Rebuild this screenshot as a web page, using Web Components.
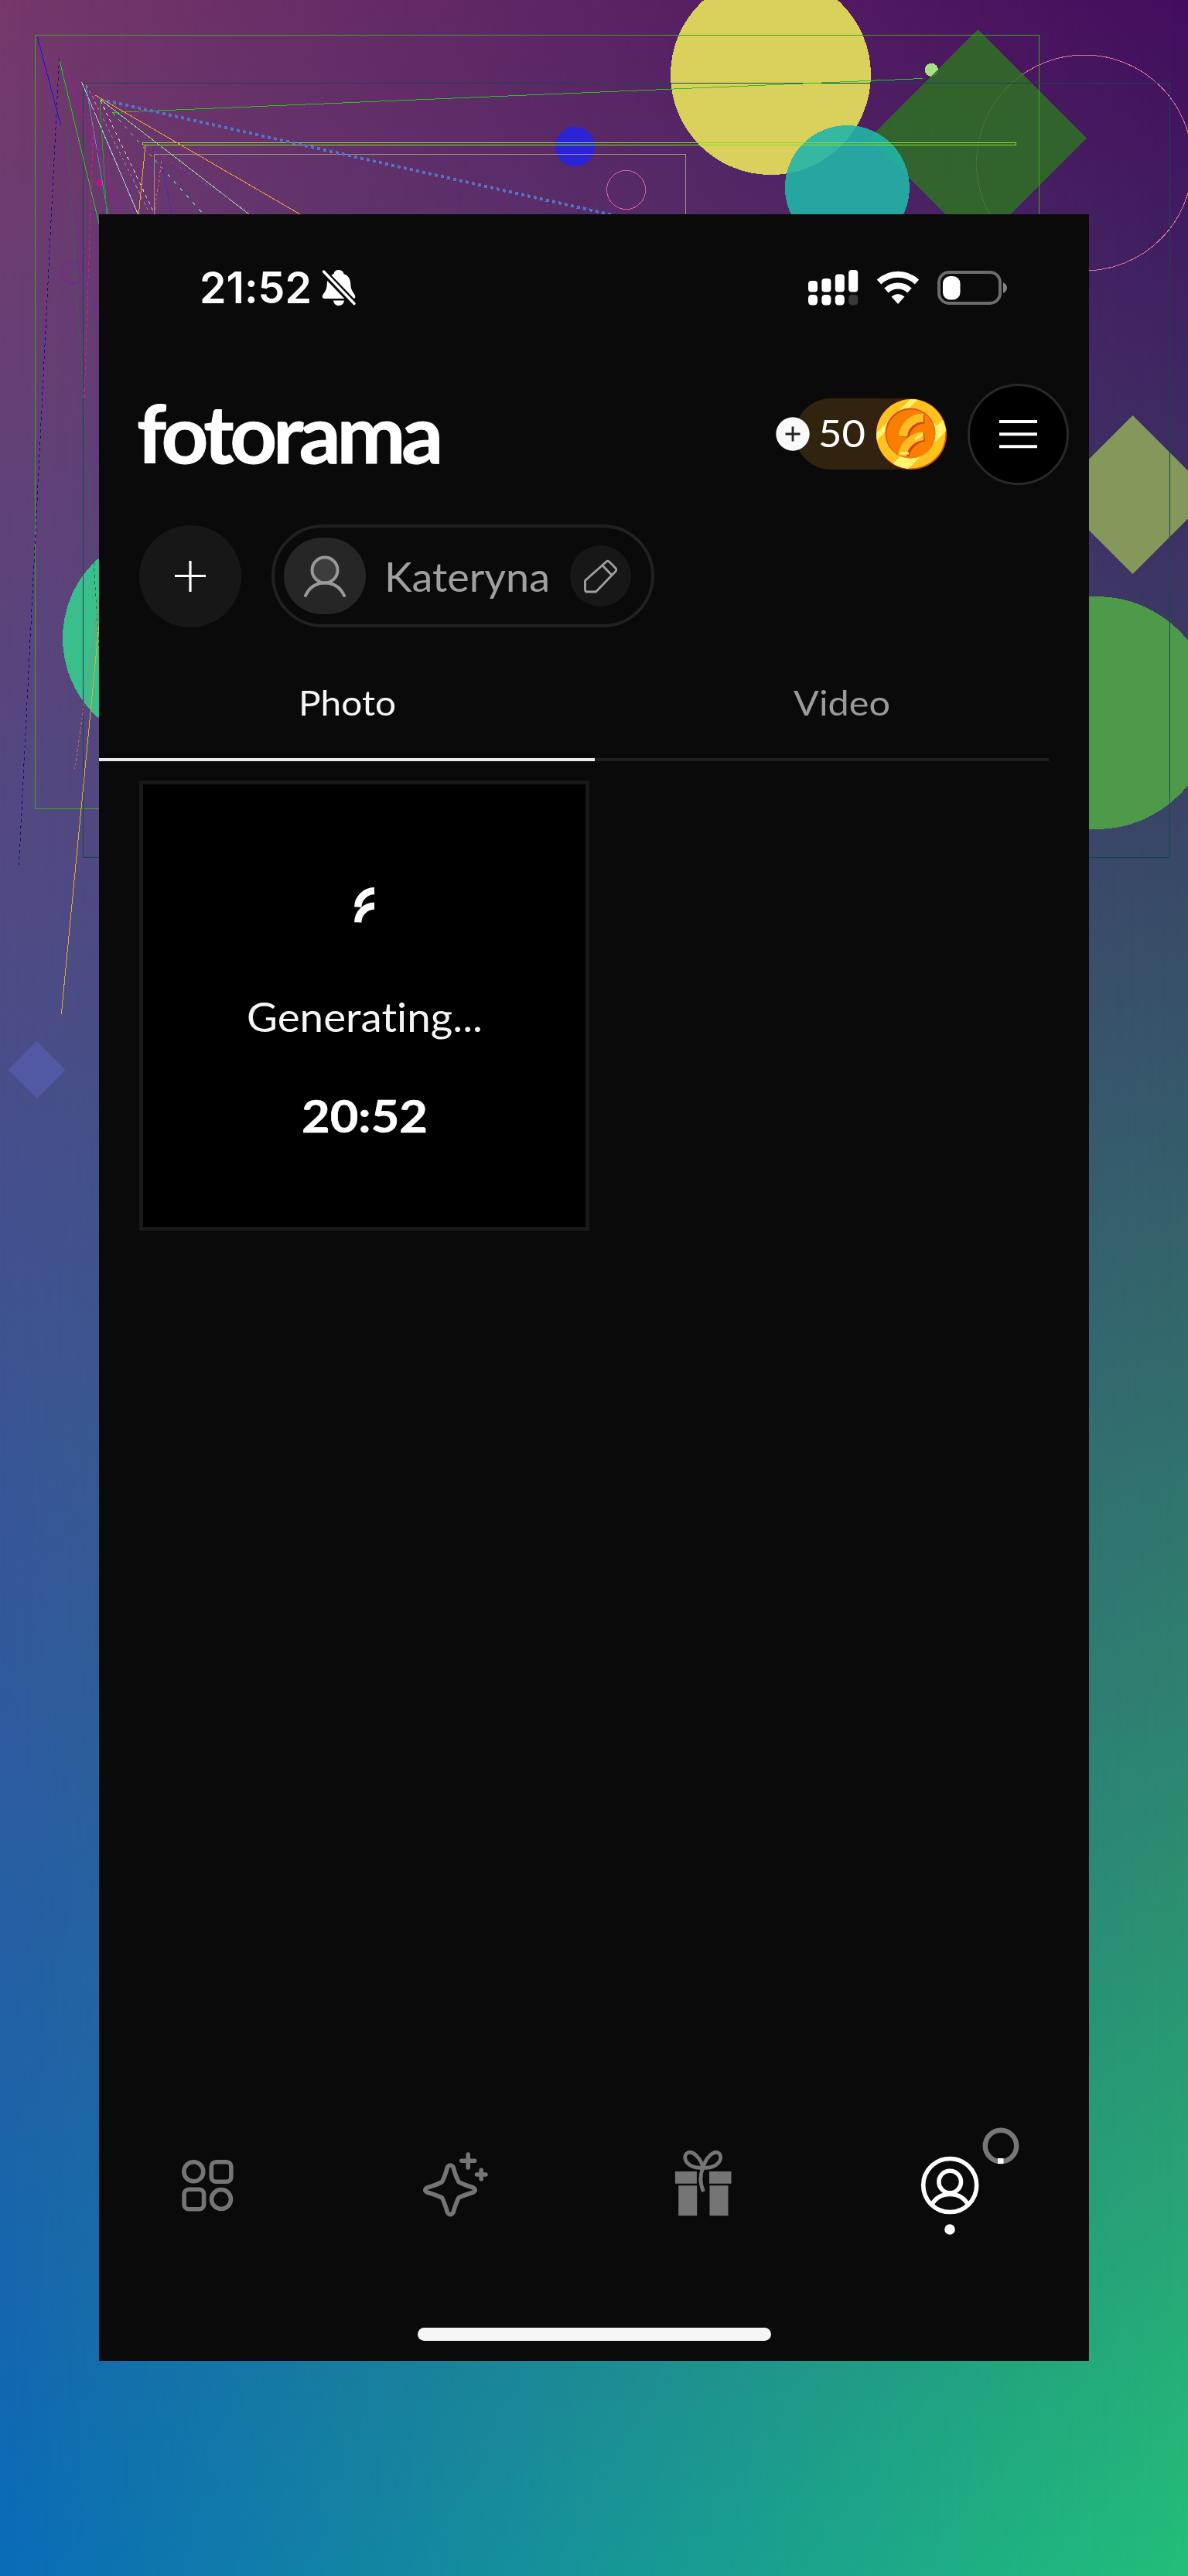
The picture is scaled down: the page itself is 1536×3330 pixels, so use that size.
<!DOCTYPE html>
<html lang="en">
<head>
<meta charset="utf-8">
<title>fotorama</title>
<style>
  body {
    margin: 0;
    width: 1536px;
    height: 3330px;
    overflow: hidden;
    font-family: Lato, "Open Sans", sans-serif;
    font-variant-ligatures: none;
    color: #fff;
  }
</style>
</head>
<body>
<poster-frame>
  <phone-screen>
    <status-bar>21:52</status-bar>
    <app-header balance="50">fotorama</app-header>
    <profile-row>Kateryna</profile-row>
    <tab-bar>
      <tab-item active width="126">Photo</tab-item>
      <tab-item width="125">Video</tab-item>
    </tab-bar>
    <photo-card time="20:52">Generating...</photo-card>
    <bottom-nav slot="nav"></bottom-nav>
  </phone-screen>
</poster-frame>

<script>
const ICONS = {
  bell: [44, 48, `
    <path fill="#fff" d="M22 1c4 0 6 2.500 6.500 5 6 2 8.500 7 8.800 13 .3 8 3 10 5.200 14 2 4 0 5-2 5H4c-3 0-4-2-2.500-5C4 29 6.500 27 6.800 19 7 13 10 8 15.500 6 16 3 18 1 22 1zM15 40.500h14c-.5 4-3 6.500-7 6.500s-6.500-2.500-7-6.500z"/>
    <path stroke="#0a0a0a" stroke-width="9" d="M-2-1 46 49"/>
    <path stroke="#fff" stroke-width="3.400" stroke-linecap="round" d="M2.500 3 42 44.500"/>`],
  signal: [65, 46, `
    <g fill="#fff"><rect y="14" width="12" height="14.500" rx="4"/><rect x="17.400" y="11" width="12" height="17.500" rx="4"/>
    <rect x="34.800" y="5.500" width="12" height="23" rx="4"/><rect x="52.200" width="12" height="28.500" rx="4"/>
    <rect y="32" width="12" height="13.500" rx="4.500"/><rect x="17.400" y="32" width="12" height="13.500" rx="4.500"/><rect x="34.800" y="32" width="12" height="13.500" rx="4.500"/></g>
    <rect x="52.200" y="32" width="12" height="13.500" rx="4.500" fill="#3a3a3a"/>`],
  wifi: [56, 42, `
    <g fill="none" stroke="#fff" stroke-width="8"><path d="M3.500 13.500a35.500 35.500 0 0 1 49 0"/><path d="M13 24.500a22 22 0 0 1 30 0"/></g>
    <path fill="#fff" d="M28 42 19.500 32.500Q28 25.500 36.500 32.500z"/>`],
  battery: [91, 44, `
    <rect x="2" y="2" width="79" height="40" rx="13" fill="none" stroke="#6c6c6c" stroke-width="4"/>
    <rect x="7" y="7" width="22.500" height="30.500" rx="9.500" fill="#fff"/><path fill="#858585" d="M85 15q5 3 5 7t-5 7z"/>`],
  mark: [26, 46, `
    <g fill="none" stroke="#fff" stroke-width="9.300"><path d="M26 4.700A21.500 21.500 0 0 0 4.700 25.500"/><path d="M26 24.200A21.500 21.500 0 0 0 4.700 45.300"/></g>`],
  coin: [92, 92, `
    <defs><clipPath id="c"><circle cx="46" cy="46" r="45"/></clipPath></defs>
    <circle cx="46.500" cy="46.500" r="45.500" fill="#c9541c"/>
    <g clip-path="url(#c)"><circle cx="45.500" cy="45.500" r="45" fill="#ffc21f"/>
    <path d="M-6 57 56-5M78 34 22 90M91 37 31 97" stroke="#fff36e" stroke-width="7"/><path d="M92 32 31 93" stroke="#fff36e" stroke-width="13"/></g>
    <circle cx="45" cy="45" r="32.500" fill="#d9541b"/><circle cx="45.800" cy="46" r="31.500" fill="#fa7e00"/>
    <g fill="none" stroke-width="11"><g stroke="#c9481e"><path d="M63.500 27A26 26 0 0 0 38 50"/><path d="M63.500 50A30 30 0 0 0 38 74"/></g>
    <path stroke="#ffbd22" d="M62 25A26 26 0 0 0 35.500 49"/><path stroke="#ffbd22" d="M62 48.500A30 30 0 0 0 34.500 74"/></g>
    <path stroke="#fff36e" stroke-width="3" d="m51 53 10-7M32 71h11"/>`],
  addSmall: [44, 44, `<circle cx="22" cy="22" r="21.700" fill="#f9f9f9"/><path stroke="#222" stroke-width="2.800" d="M12.500 22h19M22 12.500v19"/>`],
  menu: [50, 36, `<path stroke="#fff" stroke-width="4" d="M0 2h49M0 18.200h49M0 34.200h49"/>`],
  plus: [40, 40, `<path stroke="#fff" stroke-width="3.200" d="M0 19.500h40M20 0v40"/>`],
  person: [54, 54, `
    <g stroke="#999" stroke-width="4" stroke-linecap="round"><circle cx="27" cy="19" r="16.500" fill="#3d3d3d"/>
    <path fill="none" d="M2 52c4.500-10 13-16.500 25-16.500S47.500 42 52 52"/></g>`],
  pencil: [44, 44, `
    <path fill="none" stroke="#a0a0a0" stroke-width="2.800" stroke-linejoin="round" d="M1.500 27.500 28.500 3.500Q30.500 1 33 3.500L40.500 11Q43 14 40.500 16L15.500 42H4Q1.500 42 1.500 39zM24 8 36 20.500"/>`],
  grid: [80, 120, `
    <g fill="none" stroke="#757575" stroke-width="5.600"><circle cx="22.300" cy="37.300" r="12.500"/><rect x="45.300" y="24.800" width="25.500" height="25.500" rx="6"/>
    <rect x="10.100" y="60.200" width="25.500" height="25.500" rx="6"/><circle cx="58" cy="73" r="12.500"/></g>`],
  sparkle: [80, 120, `
    <g fill="none" stroke="#757575" stroke-width="5.600" stroke-linecap="round" stroke-linejoin="round">
    <path d="M30.500 31.500Q34.200 26.500 38 31.500C40 39 42 45 45 50.500 51 54 57.500 56 64 58Q68.500 61 64 64C57.500 66 51 68 45 71 42 77 40 83 38 90Q34.200 95.500 30.500 90C28.500 83 26.500 77 23.500 71 17.500 68 11 66 4 64Q-.5 61 4 58C11 56 17.500 54 23.500 50.500 26.500 45 28.500 39 30.500 31.500z"/>
    <path d="M57.200 15v17M48.700 23.300h17M74.200 35.200v11.500M68.500 41h11.500"/></g>`],
  gift: [80, 120, `
    <path fill="#757575" d="M4.900 37h28v15.700h-28zM49 37h28.500v15.700H49zM9.200 55.300h24v39h-24zM49.500 55.300h24v39h-24z"/>
    <path fill="none" stroke="#757575" stroke-width="4.800" d="M41 32C22 34 14 21 19.500 14 27 8 38 20 41 32 44 20 55 8 62 14 67.500 21 59 34 41 32ZM41 32Q34.500 47 41.500 63"/>`],
  profile: [80, 120, `
    <g fill="none" stroke="#fff" stroke-width="5.600"><circle cx="40.200" cy="55" r="34.500"/><circle cx="40.200" cy="50.500" r="14.300"/>
    <path d="M16.700 80Q24.200 66.500 40.200 66.500T63.700 80"/></g><circle cx="40" cy="112" r="6.800" fill="#fff"/>`],
  spinner: [48, 48, `<circle cx="24" cy="24" r="20.200" fill="none" stroke="#777" stroke-width="6.400"/><path fill="#fff" d="M20 40h7.500v7H20z"/>`],
};

class AppIcon extends HTMLElement {
  connectedCallback() {
    const [w, h, body] = ICONS[this.getAttribute('name')];
    this.attachShadow({ mode: 'open' }).innerHTML = `
      <style>
        :host { display: block; flex: none; }
        svg { display: block; overflow: visible; }
      </style>
      <svg width="${w}" height="${h}" viewBox="0 0 ${w} ${h}">${body}</svg>`;
  }
}

// One line of text, its glyphs widened or narrowed to span the given width
class FitText extends HTMLElement {
  connectedCallback() {
    this.attachShadow({ mode: 'open' }).innerHTML = `
      <style>
        :host { display: block; flex: none; line-height: 1; white-space: nowrap; }
        span { display: inline-block; transform-origin: left; }
      </style>
      <span>${this.getAttribute('text')}</span>`;
    const span = this.shadowRoot.querySelector('span');
    const width = Number(this.getAttribute('width'));
    span.style.transform = `scaleX(${width / span.getBoundingClientRect().width})`;
    this.style.width = width + 'px';
  }
}

class PosterFrame extends HTMLElement {
  constructor() {
    super();
    this.attachShadow({ mode: 'open' }).innerHTML = `
      <style>
        :host {
          display: block;
          position: relative;
          box-sizing: border-box;
          width: 1536px;
          height: 3330px;
          padding: 277px 128px 278px;
          overflow: hidden;
          background: linear-gradient(#76386a, #0a6cb8);
        }
        .tint {
          position: absolute;
          inset: 0;
          background: linear-gradient(#430d5e, #23be78);
          -webkit-mask-image: linear-gradient(to right, transparent, #000);
          mask-image: linear-gradient(to right, transparent, #000);
        }
        svg { position: absolute; left: 0; top: 0; }
        ::slotted(*) { position: relative; }
      </style>
      <div class="tint"></div>
      <svg width="1536" height="1500" shape-rendering="crispEdges">
        <circle cx="996.500" cy="96.500" r="129.500" fill="#dad05c"/>
        <circle cx="1402" cy="210.500" r="139.500" fill="none" stroke="#e8749a"/>
        <circle cx="1204.400" cy="90.300" r="8.600" fill="#a6e283"/>
        <path fill="#2f7025" fill-opacity=".85" d="M1264.700 38 1405 178.500 1264.700 319 1124.500 178.500z"/>
        <circle cx="1095.400" cy="242.500" r="80.500" fill="#22b4a7" fill-opacity=".9"/>
        <circle cx="743.500" cy="189.500" r="25.700" fill="#2d23d6"/>
        <circle cx="809.600" cy="245.500" r="25" fill="none" stroke="#d863a0"/>
        <path fill="#83985a" d="M1464.300 537.200 1566.600 639.500 1464.300 741.800 1362 639.500z"/>
        <circle cx="1418" cy="921.500" r="150.500" fill="#4e9a4b"/>
        <circle cx="219.600" cy="825" r="138.600" fill="#3abe8b"/>
        <circle cx="94" cy="352.500" r="14" fill="none" stroke="#7a1ab0"/>
        <circle cx="129" cy="236.500" r="4.500" fill="#c80f80"/>
        <path fill="#5358a5" d="M47.700 1346 84.700 1383 47.700 1420 10.700 1383z"/>
        <g fill="none">
          <path stroke="#3aa91c" d="M45.500 45.500h1298v1000H45.500z"/>
          <path stroke="#12494f" d="M107.500 107.500h1405v1001h-1405z"/>
          <path stroke="#a0937f" d="M199.500 199.500h687v200h-687z"/>
          <path stroke="#8adf22" d="M184.500 184.500h1129v3h-1129z"/>
          <path stroke="#28c41c" d="M145 145.500 1193 101.500"/>
          <path stroke="#5472c8" stroke-width="4" stroke-dasharray="4 4.200" d="M130 128.500 792 278"/>
          <path stroke="#5f3d38" stroke-dasharray="5 3" d="M111 110 320 279"/>
          <path stroke="#f79a3c" d="M123 123 388 277"/>
          <path stroke="#8fcf9a" d="M129 128 322 277"/>
          <path stroke="#8238c8" stroke-dasharray="5 3 2 3" d="M188 188 328 277"/>
          <path stroke="#45dfa0" stroke-dasharray="5 7" d="M145 145 263 277"/>
          <path stroke="#a8cbe0" d="M105.500 106 178.500 277"/>
          <path stroke="#8e8a90" stroke-dasharray="4 4" d="M112 110 193 275"/>
          <path stroke="#d8cfb4" stroke-dasharray="4 5" d="M130 130 200 277"/>
          <path stroke="#3a9aaa" d="M111 110 139.500 277"/>
          <path stroke="#b808b8" d="M81 80 157 277"/>
          <path stroke="#1ecb1e" d="M77 78 128 289"/>
          <path stroke="#1aa01a" d="M129 128 138 277"/>
          <path stroke="#e8108a" stroke-dasharray="5 4" d="M122 122 108.500 532"/>
          <path stroke="#1a0a8c" stroke-dasharray="4 4" d="M76.500 76 24.500 1118"/>
          <path stroke="#157a3c" stroke-dasharray="4 4" d="M81 80 127.800 835"/>
          <path stroke="#8a12c0" stroke-dasharray="3 3" d="M48 48 133 445"/>
          <path stroke="#1a10e0" d="M48.500 48 78.500 162"/>
          <path stroke="#e8ab30" d="M188 187 79.300 1311"/>
          <path stroke="#e06060" stroke-dasharray="4 3 2 3" d="M209 208 96.700 994"/>
          <path stroke="#4a28b8" d="M209 208 222 277"/>
        </g>
      </svg>
      <slot></slot>`;
  }
}

class PhoneScreen extends HTMLElement {
  constructor() {
    super();
    this.attachShadow({ mode: 'open' }).innerHTML = `
      <style>
        :host {
          display: flex;
          flex-direction: column;
          height: 2775px;
          background: #0a0a0a;
        }
        main { flex: 1; }
        .home {
          width: 457px;
          height: 17px;
          margin: 119px auto 26px;
          border-radius: 9px;
          background: #f5f5f5;
        }
      </style>
      <main><slot></slot></main>
      <slot name="nav"></slot>
      <div class="home"></div>`;
  }
}

class StatusBar extends HTMLElement {
  connectedCallback() {
    this.attachShadow({ mode: 'open' }).innerHTML = `
      <style>
        :host {
          display: flex;
          align-items: center;
          height: 190px;
          box-sizing: border-box;
          padding: 0 105px 0 130px;
          font-family: Inter, sans-serif;
          font-size: 56px;
          font-weight: 600;
        }
        .bell { margin-left: 13px; }
        .right { display: flex; align-items: center; gap: 23px; margin-left: auto; }
      </style>
      <fit-text width="145" text="${this.textContent}"></fit-text>
      <app-icon class="bell" name="bell"></app-icon>
      <div class="right">
        <app-icon name="signal"></app-icon>
        <app-icon name="wifi"></app-icon>
        <app-icon name="battery"></app-icon>
      </div>`;
  }
}

class AppHeader extends HTMLElement {
  connectedCallback() {
    this.attachShadow({ mode: 'open' }).innerHTML = `
      <style>
        :host {
          display: flex;
          align-items: center;
          height: 188px;
          box-sizing: border-box;
          padding: 0 26px 0 49px;
        }
        .logo {
          margin-top: -3px;
          font-size: 103px;
          font-weight: 700;
          letter-spacing: -5px;
          -webkit-text-stroke: 1px #fff;
        }
        .coins {
          display: flex;
          align-items: center;
          box-sizing: border-box;
          width: 196px;
          height: 92px;
          margin: 0 27px 0 auto;
          border-radius: 46px;
          background: linear-gradient(90deg, #30250e, #351f10);
        }
        .coins .add { margin-left: -25px; }
        .coins fit-text { margin: -3px 0 0 11px; font-size: 49px; }
        .coins .coin { margin-left: auto; }
        .menu {
          display: flex;
          align-items: center;
          justify-content: center;
          box-sizing: border-box;
          width: 131px;
          height: 131px;
          border: 3px solid #29292a;
          border-radius: 50%;
          background: #000;
        }
      </style>
      <fit-text class="logo" width="391" text="${this.textContent}"></fit-text>
      <div class="coins">
        <app-icon class="add" name="addSmall"></app-icon>
        <fit-text width="61" text="${this.getAttribute('balance')}"></fit-text>
        <app-icon class="coin" name="coin"></app-icon>
      </div>
      <div class="menu"><app-icon name="menu"></app-icon></div>`;
  }
}

class ProfileRow extends HTMLElement {
  connectedCallback() {
    this.attachShadow({ mode: 'open' }).innerHTML = `
      <style>
        :host {
          display: flex;
          align-items: center;
          gap: 39px;
          height: 179px;
          padding-left: 52px;
        }
        div { display: flex; align-items: center; justify-content: center; box-sizing: border-box; }
        .add { width: 132px; height: 132px; border-radius: 50%; background: #171717; }
        .chip {
          justify-content: flex-start;
          width: 495px;
          height: 133px;
          padding-left: 12px;
          border: 4px solid #212121;
          border-radius: 67px;
        }
        .avatar { width: 106px; height: 99px; border-radius: 50px; background: #262626; }
        fit-text { margin: 0 26px 0 24px; font-size: 53px; color: #a0a0a0; }
        .edit { width: 79px; height: 79px; border-radius: 50%; background: #171717; }
      </style>
      <div class="add"><app-icon name="plus"></app-icon></div>
      <div class="chip">
        <div class="avatar"><app-icon name="person"></app-icon></div>
        <fit-text width="214" text="${this.textContent}"></fit-text>
        <div class="edit"><app-icon name="pencil"></app-icon></div>
      </div>`;
  }
}

class TabBar extends HTMLElement {
  constructor() {
    super();
    this.attachShadow({ mode: 'open' }).innerHTML = `
      <style>
        :host { display: grid; grid-template-columns: 641px 639px; height: 150px; }
      </style>
      <slot></slot>`;
  }
}

class TabItem extends HTMLElement {
  connectedCallback() {
    this.attachShadow({ mode: 'open' }).innerHTML = `
      <style>
        :host {
          display: flex;
          flex-direction: column;
          align-items: center;
          justify-content: space-between;
          font-size: 45px;
          color: #9a9a9a;
        }
        fit-text { margin-top: 52px; }
        .line { align-self: stretch; height: 4px; margin-right: 52px; background: #202020; }
        :host([active]) { color: #f6f6f6; }
        :host([active]) .line { margin-right: 0; background: #ececec; }
      </style>
      <fit-text width="${this.getAttribute('width')}" text="${this.textContent}"></fit-text>
      <div class="line"></div>`;
  }
}

class PhotoCard extends HTMLElement {
  connectedCallback() {
    this.attachShadow({ mode: 'open' }).innerHTML = `
      <style>
        :host {
          display: flex;
          flex-direction: column;
          align-items: center;
          box-sizing: border-box;
          width: 582px;
          height: 582px;
          margin: 25px 0 0 52px;
          padding-top: 133px;
          border: 5px solid #18191a;
          background: #000;
        }
        .label { margin-top: 94px; font-size: 53px; color: #f5f5f5; }
        .time { margin-top: 73px; font-size: 58px; font-weight: 700; -webkit-text-stroke: .6px #fff; }
      </style>
      <app-icon name="mark"></app-icon>
      <fit-text class="label" width="305" text="${this.textContent}"></fit-text>
      <fit-text class="time" width="163" text="${this.getAttribute('time')}"></fit-text>`;
  }
}

class BottomNav extends HTMLElement {
  constructor() {
    super();
    this.attachShadow({ mode: 'open' }).innerHTML = `
      <style>
        :host {
          display: flex;
          justify-content: space-between;
          padding: 0 140px 0 100px;
        }
        .current { position: relative; }
        .badge { position: absolute; left: 82px; top: -20px; }
      </style>
      <app-icon name="grid"></app-icon>
      <app-icon name="sparkle"></app-icon>
      <app-icon name="gift"></app-icon>
      <div class="current">
        <app-icon name="profile"></app-icon>
        <app-icon class="badge" name="spinner"></app-icon>
      </div>`;
  }
}

customElements.define('app-icon', AppIcon);
customElements.define('fit-text', FitText);
customElements.define('poster-frame', PosterFrame);
customElements.define('phone-screen', PhoneScreen);
customElements.define('status-bar', StatusBar);
customElements.define('app-header', AppHeader);
customElements.define('profile-row', ProfileRow);
customElements.define('tab-bar', TabBar);
customElements.define('tab-item', TabItem);
customElements.define('photo-card', PhotoCard);
customElements.define('bottom-nav', BottomNav);
</script>
</body>
</html>
